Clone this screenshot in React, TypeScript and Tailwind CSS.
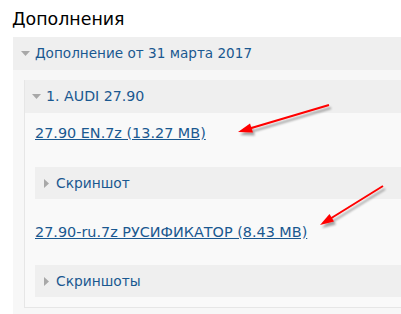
const font = { fontFamily: '"DejaVu Sans", Verdana, sans-serif' };

function Caret({ open }: { open?: boolean }) {
  return open ? (
    <svg width="9" height="5" viewBox="0 0 9 5" className="shrink-0">
      <path d="M0 0h9L4.5 5z" fill="#a8a8a8" />
    </svg>
  ) : (
    <svg width="5" height="9" viewBox="0 0 5 9" className="shrink-0">
      <path d="M0 0v9l5-4.5z" fill="#a8a8a8" />
    </svg>
  );
}

function Arrows() {
  return (
    <svg
      className="pointer-events-none absolute left-0 top-0"
      width="401"
      height="314"
      viewBox="0 0 401 314"
    >
      <defs>
        <filter id="sh" x="-20%" y="-20%" width="140%" height="140%">
          <feDropShadow dx="2" dy="3" stdDeviation="1.3" floodColor="#000" floodOpacity="0.35" />
        </filter>
      </defs>
      <g filter="url(#sh)">
        <line x1="329" y1="105" x2="248" y2="129" stroke="#ff0000" strokeWidth="2" />
        <path d="M238 132 L253 132.5 L250 123.5 Z" fill="#ff0000" />
        <line x1="383" y1="186" x2="329" y2="219.5" stroke="#ff0000" strokeWidth="2" />
        <path d="M320 225 L334 221.5 L329.5 214 Z" fill="#ff0000" />
      </g>
    </svg>
  );
}

export default function App() {
  return (
    <div className="relative h-[314px] w-[401px] overflow-hidden bg-white" style={font}>
      <h2 className="h-[37px] pl-[12px] pt-[8px] text-[17.4px] leading-[22px] text-black">
        Дополнения
      </h2>

      <div className="ml-[13px] bg-[#f7f7f7]">
        <div className="flex h-[33px] items-center gap-[5px] bg-[#efefef] pl-[8px] text-[13.6px] text-[#1a5890]">
          <Caret open />
          <span>Дополнение от 31 марта 2017</span>
        </div>

        <div className="pb-[20px] pl-[11px] pt-[10px]">
          <div className="border-b border-l border-[#e6e6e6] bg-[#f9f9f9]">
            <div className="flex h-[33px] items-center gap-[5px] bg-[#efefef] pl-[7px] text-[14.2px] text-[#1a5890]">
              <Caret open />
              <span>1. AUDI 27.90</span>
            </div>

            <div className="pb-[10px] pl-[10px]">
              <div className="pb-[24px] pt-[10px] leading-[20px]">
                <a href="#" className="text-[14.4px] text-[#1a5890] underline">
                  27.90 EN.7z (13.27 MB)
                </a>
              </div>
              <div className="flex h-[32px] items-center gap-[7px] bg-[#efefef] pl-[9px] text-[13.8px] text-[#1a5890]">
                <Caret />
                <span>Скриншот</span>
              </div>
              <div className="pb-[23px] pt-[23px] leading-[20px]">
                <a href="#" className="text-[14.4px] text-[#1a5890] underline">
                  27.90-ru.7z РУСИФИКАТОР (8.43 MB)
                </a>
              </div>
              <div className="flex h-[32px] items-center gap-[7px] bg-[#efefef] pl-[9px] text-[13.8px] text-[#1a5890]">
                <Caret />
                <span>Скриншоты</span>
              </div>
            </div>
          </div>
        </div>
      </div>

      <Arrows />
    </div>
  );
}
